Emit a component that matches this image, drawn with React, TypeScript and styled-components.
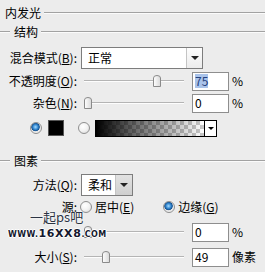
import React from "react";
import styled, { createGlobalStyle } from "styled-components";

const Global = createGlobalStyle`
  html, body { margin: 0; padding: 0; background: #ececec; }
  body {
    font-family: "Noto Sans CJK SC", "Noto Sans", sans-serif;
    font-size: 12px;
    color: #000;
  }
`;

const Panel = styled.div`
  position: relative;
  width: 265px;
  height: 272px;
  overflow: hidden;
  padding-top: 3px;
  box-sizing: border-box;
  background: #ececec;
`;

const Header = styled.div<{ $indent?: boolean; $mt?: number }>`
  display: flex;
  align-items: center;
  height: 19px;
  line-height: 19px;
  margin-top: ${(p) => p.$mt ?? 0}px;
  padding-left: ${(p) => (p.$indent ? 0 : 5)}px;
  white-space: nowrap;
  &::before {
    content: "";
    display: ${(p) => (p.$indent ? "block" : "none")};
    width: 10px;
    border-top: 1px solid #a2a2a2;
    border-bottom: 1px solid #fbfbfb;
    margin-right: 4px;
  }
  &::after {
    content: "";
    flex: 1;
    border-top: 1px solid #a2a2a2;
    border-bottom: 1px solid #fbfbfb;
    margin-left: 3px;
  }
`;

const Row = styled.div<{ $mt: number; $h: number; $pl?: number }>`
  display: flex;
  align-items: center;
  height: ${(p) => p.$h}px;
  margin-top: ${(p) => p.$mt}px;
  padding-left: ${(p) => p.$pl ?? 0}px;
  white-space: nowrap;
`;

const Label = styled.span`
  flex: none;
  width: 77px;
  text-align: right;
  line-height: 16px;
  u { text-underline-offset: 1px; }
`;

const Select = styled.div<{ $w: number }>`
  flex: none;
  display: flex;
  align-items: center;
  margin-left: 4px;
  width: ${(p) => p.$w}px;
  height: 22px;
  box-sizing: border-box;
  border: 1px solid #7d7d7d;
  background: #fff;
  padding-left: 6px;
  line-height: 16px;
`;

const DropButton = styled.span<{ $w: number; $grey?: boolean }>`
  margin-left: auto;
  width: ${(p) => p.$w}px;
  height: 20px;
  box-sizing: border-box;
  border-left: 1px solid #c4c4c4;
  background: ${(p) =>
    p.$grey ? "linear-gradient(#e2e2e2, #cfcfcf)" : "linear-gradient(#fdfdfd, #ececec)"};
  display: flex;
  align-items: center;
  justify-content: center;
  &::after {
    content: "";
    border-left: 4px solid transparent;
    border-right: 4px solid transparent;
    border-top: 4px solid #222;
  }
`;

const SliderBox = styled.div`
  flex: none;
  position: relative;
  margin-left: 7px;
  width: 100px;
  height: 12px;
  &::before {
    content: "";
    position: absolute;
    left: 0;
    right: 0;
    top: 5px;
    border-top: 1px solid #b4b4b4;
    border-bottom: 1px solid #fdfdfd;
  }
`;

const Thumb = styled.svg`
  position: absolute;
  top: 0;
`;

const Slider = ({ value }: { value: number }) => (
  <SliderBox>
    <Thumb width="8" height="12" viewBox="0 0 8 12" style={{ left: `${value * 92}px` }}>
      <defs>
        <linearGradient id="tg" x1="0" y1="0" x2="1" y2="0">
          <stop offset="0" stopColor="#ffffff" />
          <stop offset="1" stopColor="#d8d8d8" />
        </linearGradient>
      </defs>
      <path d="M0.5 3 Q0.5 0.5 4 0.5 Q7.5 0.5 7.5 3 L7.5 11.5 L0.5 11.5 Z" fill="url(#tg)" stroke="#8a8a8a" />
    </Thumb>
  </SliderBox>
);

const NumInput = styled.div`
  flex: none;
  margin-left: 8px;
  width: 37px;
  height: 19px;
  box-sizing: border-box;
  border: 1px solid #8e8e8e;
  background: #fff;
  padding-left: 2px;
  display: flex;
  align-items: center;
  line-height: 14px;
`;

const Selected = styled.span`
  background: #a9c3ea;
  color: #24407e;
`;

const Unit = styled.span`
  margin-left: 3px;
  line-height: 16px;
`;

const Radio = styled.span<{ $on?: boolean; $ml?: number }>`
  flex: none;
  margin-left: ${(p) => p.$ml ?? 0}px;
  width: 12px;
  height: 12px;
  box-sizing: border-box;
  border-radius: 50%;
  border: 1px solid #8f8f8f;
  background: ${(p) =>
    p.$on
      ? "radial-gradient(circle at 45% 40%, #a8dcff 0, #3b8fd6 28%, #145292 48%, #e6e6e6 56%, #ffffff 100%)"
      : "radial-gradient(circle at 40% 35%, #ffffff 0, #f2f2f2 50%, #d2d2d2 100%)"};
`;

const RadioText = styled.span`
  margin-left: 3px;
  line-height: 16px;
`;

const Swatch = styled.span`
  flex: none;
  margin-left: 6px;
  width: 16px;
  height: 16px;
  box-sizing: border-box;
  background: #000;
  border: 1px solid #555;
`;

const Gradient = styled.div`
  flex: none;
  display: flex;
  margin-left: 5px;
  width: 122px;
  height: 17px;
  box-sizing: border-box;
  border: 1px solid #000;
`;

const GradientFill = styled.span`
  flex: 1;
  background:
    linear-gradient(to right, #000 0%, rgba(0, 0, 0, 0.6) 35%, rgba(0, 0, 0, 0) 100%),
    repeating-conic-gradient(#c8c8c8 0 25%, #ffffff 0 50%) 0 0 / 8px 8px;
`;

const GradientArrow = styled.span`
  flex: none;
  width: 11px;
  border-left: 1px solid #000;
  background: #fff;
  display: flex;
  align-items: center;
  justify-content: center;
  &::after {
    content: "";
    border-left: 3px solid transparent;
    border-right: 3px solid transparent;
    border-top: 3px solid #000;
  }
`;

const WatermarkTop = styled.div`
  position: absolute;
  left: 30px;
  top: 210px;
  font-family: "Noto Sans CJK SC", sans-serif;
  font-size: 13px;
  line-height: 14px;
  color: #2c3444;
  text-shadow: 0 0 2px #fff, 0 0 1px #fff;
`;

const WatermarkBottom = styled.div`
  position: absolute;
  left: 8px;
  top: 227px;
  font-family: "DejaVu Sans", sans-serif;
  font-weight: bold;
  color: #14182e;
  line-height: 13px;
  white-space: nowrap;
  text-shadow: 1px 0 0 #fff, -1px 0 0 #fff, 0 1px 0 #fff, 0 -1px 0 #fff;
`;

const WmSmall = styled.span`
  font-size: 8px;
  letter-spacing: 0.4px;
`;

const WmBig = styled.span`
  font-size: 11px;
  letter-spacing: 0.6px;
`;

export default function App() {
  return (
    <>
      <Global />
      <Panel>
        <Header>内发光</Header>
        <Header $indent>结构</Header>

        <Row $mt={6} $h={22}>
          <Label>
            混合模式(<u>B</u>):
          </Label>
          <Select $w={122}>
            正常
            <DropButton $w={16} />
          </Select>
        </Row>

        <Row $mt={2} $h={20}>
          <Label>
            不透明度(<u>O</u>):
          </Label>
          <Slider value={0.75} />
          <NumInput>
            <Selected>75</Selected>
          </NumInput>
          <Unit>%</Unit>
        </Row>

        <Row $mt={2} $h={20}>
          <Label>
            杂色(<u>N</u>):
          </Label>
          <Slider value={0} />
          <NumInput>0</NumInput>
          <Unit>%</Unit>
        </Row>

        <Row $mt={6} $h={18} $pl={30}>
          <Radio $on />
          <Swatch />
          <Radio $ml={14} />
          <Gradient>
            <GradientFill />
            <GradientArrow />
          </Gradient>
        </Row>

        <Header $indent $mt={14}>
          图素
        </Header>

        <Row $mt={4} $h={22}>
          <Label>
            方法(<u>Q</u>):
          </Label>
          <Select $w={52}>
            柔和
            <DropButton $w={17} $grey />
          </Select>
        </Row>

        <Row $mt={3} $h={16}>
          <Label>源:</Label>
          <Radio $ml={3} />
          <RadioText>
            居中(<u>E</u>)
          </RadioText>
          <Radio $ml={29} $on />
          <RadioText>
            边缘(<u>G</u>)
          </RadioText>
        </Row>

        <Row $mt={7} $h={20}>
          <Label />
          <Slider value={0} />
          <NumInput>0</NumInput>
          <Unit>%</Unit>
        </Row>

        <Row $mt={5} $h={20}>
          <Label>
            大小(<u>S</u>):
          </Label>
          <Slider value={49 / 250} />
          <NumInput>49</NumInput>
          <Unit>像素</Unit>
        </Row>

        <WatermarkTop>一起ps吧</WatermarkTop>
        <WatermarkBottom>
          <WmSmall>WWW.</WmSmall>
          <WmBig>16XX8</WmBig>
          <WmSmall>.COM</WmSmall>
        </WatermarkBottom>
      </Panel>
    </>
  );
}
